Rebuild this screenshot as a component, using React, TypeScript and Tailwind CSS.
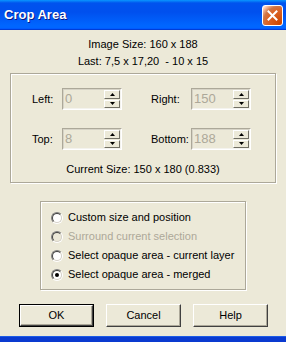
import React from 'react'

const font = "font-['Liberation_Sans',Arial,sans-serif]"

function Spin({ value }: { value: string }) {
  return (
    <div className="w-[60px] h-[22px] flex items-stretch border border-t-[#aca899] border-l-[#aca899] border-r-white border-b-white bg-[#ece9d8]">
      <div className="flex-1 flex items-stretch border border-t-[#d6d3c6] border-l-[#d6d3c6] border-r-[#f4f3ee] border-b-[#f4f3ee]">
        <span className="flex-1 pl-[1px] leading-[18px] text-[13px] text-[#aca899]">{value}</span>
        <div className="flex flex-col w-[16px] gap-[1px] py-[0px]">
          <SpinBtn up />
          <SpinBtn />
        </div>
      </div>
    </div>
  )
}

function SpinBtn({ up }: { up?: boolean }) {
  return (
    <div className="flex-1 flex items-center justify-center bg-[#ece9d8] border border-t-white border-l-white border-r-[#716f64] border-b-[#716f64]">
      <svg width="5" height="3" viewBox="0 0 5 3">
        {up ? <path d="M2.5 0 L5 3 L0 3 Z" fill="#000" /> : <path d="M0 0 L5 0 L2.5 3 Z" fill="#000" />}
      </svg>
    </div>
  )
}

function Radio({ label, checked, disabled }: { label: string; checked?: boolean; disabled?: boolean }) {
  return (
    <div className="flex items-center gap-[5px] h-[19px]">
      <div className="w-[12px] h-[12px] rounded-full border border-t-[#808080] border-l-[#808080] border-r-white border-b-white">
        <div className={`w-full h-full rounded-full border border-t-[#404040] border-l-[#404040] border-r-[#d4d0c8] border-b-[#d4d0c8] flex items-center justify-center ${disabled ? 'bg-[#ece9d8]' : 'bg-white'}`}>
          {checked && <div className="w-[4px] h-[4px] rounded-full bg-black" />}
        </div>
      </div>
      <span className={`text-[11px] ${disabled ? 'text-[#aca899]' : 'text-black'}`}>{label}</span>
    </div>
  )
}

function Button({ label, isDefault }: { label: string; isDefault?: boolean }) {
  const inner = (
    <div className="w-full h-full flex items-center justify-center bg-[#ece9d8] border border-t-white border-l-white border-r-[#404040] border-b-[#404040] shadow-[inset_-1px_-1px_0_#aca899]">
      <span className="text-[11px] text-black">{label}</span>
    </div>
  )
  return (
    <div className={`w-[75px] h-[23px] ${isDefault ? 'border border-black' : ''}`}>
      {inner}
    </div>
  )
}

export default function App() {
  return (
    <div className={`w-[286px] h-[342px] bg-[#ece9d8] flex flex-col ${font} text-black overflow-hidden`}>
      {/* Title bar */}
      <div className="h-[30px] shrink-0 flex items-center justify-between pl-[4px] pr-[3px] bg-[linear-gradient(to_bottom,#0997ff_0%,#0053ee_10%,#0050ee_40%,#0066ff_85%,#0066ff_92%,#005bff_95%,#003dd7_97%,#003dd7_100%)]">
        <span className="text-white font-bold text-[13px] [text-shadow:1px_1px_0_#0a1883]">Crop Area</span>
        <div className="w-[21px] h-[21px] rounded-[3px] border border-white flex items-center justify-center bg-[radial-gradient(circle_at_90%_90%,#cc4600_0%,#dc6527_55%,#cd7546_70%,#ffccb2_90%,#fff_100%)]">
          <svg width="11" height="11" viewBox="0 0 11 11">
            <path d="M1.5 1.5 L9.5 9.5 M9.5 1.5 L1.5 9.5" stroke="#fff" strokeWidth="2" strokeLinecap="square" />
          </svg>
        </div>
      </div>

      {/* Body */}
      <div className="flex-1 flex flex-col">
        <div className="pt-[6px] text-center text-[11px] leading-[17px]">
          <div>Image Size: 160 x 188</div>
          <div>Last: 7,5 x 17,20&nbsp; - 10 x 15</div>
        </div>

        <div className="mt-[3px] mx-[10px] h-[110px] border border-[#aca899] shadow-[inset_1px_1px_0_#fff,1px_1px_0_#fff] flex flex-col pt-[14px]">
          <div className="grid grid-cols-[30px_60px_29px_40px_60px] grid-rows-[22px_22px] gap-y-[18px] pl-[21px] items-center text-[11px]">
            <span>Left:</span>
            <Spin value="0" />
            <span />
            <span>Right:</span>
            <Spin value="150" />
            <span>Top:</span>
            <Spin value="8" />
            <span />
            <span>Bottom:</span>
            <Spin value="188" />
          </div>
          <div className="mt-[11px] text-center text-[11px] leading-[17px]">Current Size: 150 x 180 (0.833)</div>
        </div>

        <div className="mt-[18px] ml-[40px] w-[206px] h-[89px] border border-[#aca899] shadow-[inset_1px_1px_0_#fff,1px_1px_0_#fff] flex flex-col pt-[6px] pl-[10px]">
          <Radio label="Custom size and position" />
          <Radio label="Surround current selection" disabled />
          <Radio label="Select opaque area - current layer" />
          <Radio label="Select opaque area - merged" checked />
        </div>

        <div className="mt-[14px] pl-[19px] flex gap-[12px]">
          <Button label="OK" isDefault />
          <Button label="Cancel" />
          <Button label="Help" />
        </div>
      </div>

      <div className="h-[6px] shrink-0 bg-[#0a3ad0] border-t border-[#1c5ce6]" />
    </div>
  )
}
